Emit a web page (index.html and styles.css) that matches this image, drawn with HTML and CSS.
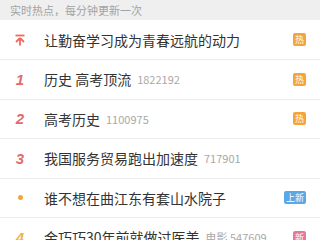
FILE: index.html
```html
<!DOCTYPE html>
<html lang="zh">
<head>
<meta charset="utf-8">
<link rel="stylesheet" href="styles.css">
</head>
<body>
<div class="page">
  <div class="header">实时热点，每分钟更新一次</div>
  <ul class="list">
    <li class="row">
      <span class="rank">
        <svg class="pin" width="12" height="12" viewBox="0 0 12 12"><path d="M1.5 1.5h9" stroke="#ef6a5c" stroke-width="1.8" fill="none"/><path d="M6 4 L2 8 M6 4 L10 8 M6 4 V11.5" stroke="#ef6a5c" stroke-width="1.8" fill="none"/></svg>
      </span>
      <span class="title">让勤奋学习成为青春远航的动力</span>
      <span class="badge hot">热</span>
    </li>
    <li class="row">
      <span class="rank num top">1</span>
      <span class="title">历史 高考顶流</span><span class="count">1822192</span>
      <span class="badge hot">热</span>
    </li>
    <li class="row">
      <span class="rank num top">2</span>
      <span class="title">高考历史</span><span class="count">1100975</span>
      <span class="badge hot">热</span>
    </li>
    <li class="row">
      <span class="rank num top">3</span>
      <span class="title">我国服务贸易跑出加速度</span><span class="count">717901</span>
    </li>
    <li class="row">
      <span class="rank"><span class="dot"></span></span>
      <span class="title">谁不想在曲江东有套山水院子</span>
      <span class="badge wide new-up">上新</span>
    </li>
    <li class="row">
      <span class="rank num low">4</span>
      <span class="title">金巧巧30年前就做过医美</span><span class="count">电影 547609</span>
      <span class="badge new">新</span>
    </li>
  </ul>
</div>
</body>
</html>
```
FILE: styles.css
```css
* { box-sizing: border-box; }
html, body { margin: 0; padding: 0; background: #fff; }
body { font-family: "Noto Sans CJK SC", "Noto Sans", sans-serif; width: 320px; overflow: hidden; }
.page { width: 320px; }
.header {
  height: 20px;
  background: #efefef;
  color: #a3a3a3;
  font-size: 11px;
  line-height: 20px;
  padding-left: 10px;
}
.list { list-style: none; margin: 0; padding: 0; }
.row {
  display: flex;
  align-items: center;
  height: 39.5px;
  border-bottom: 1px solid #ececec;
  padding-right: 14px;
}
.row:first-child { height: 40px; }
.rank {
  width: 40px;
  flex: none;
  display: flex;
  justify-content: center;
  align-items: center;
}
.num {
  font-family: "Liberation Sans", Arial, sans-serif;
  font-style: italic;
  font-weight: bold;
  font-size: 15px;
}
.top { color: #e36c68; }
.low { color: #f2b24a; }
.pin { display: block; }
.dot { width: 5px; height: 5px; border-radius: 50%; background: #f4a53a; }
.title {
  margin-left: 4px;
  font-size: 14px;
  color: #333;
  white-space: nowrap;
}
.count {
  margin-left: 6px;
  font-size: 11px;
  color: #a8a8a8;
  white-space: nowrap;
}
.badge {
  margin-left: auto;
  width: 13px;
  height: 13px;
  border-radius: 2px;
  color: #fff;
  font-size: 9px;
  line-height: 13px;
  text-align: center;
  flex: none;
}
.wide { width: 22px; }
.hot { background: #f5a43a; }
.new-up { background: #5aa8e6; }
.new { background: #e8789a; }
```
